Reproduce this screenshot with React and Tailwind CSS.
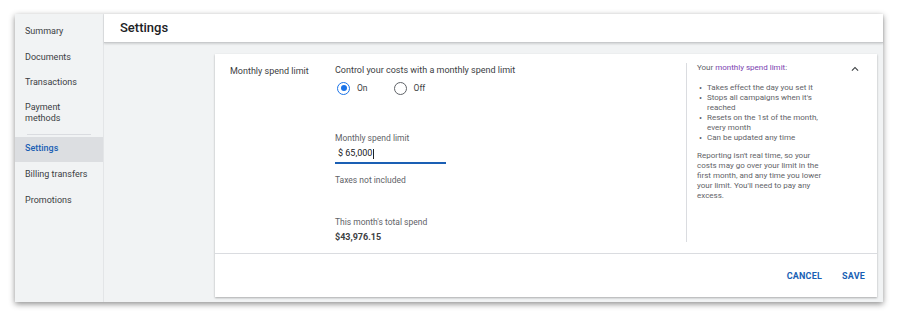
export default function App() {
  const nav = ["Summary", "Documents", "Transactions"];
  return (
    <div className="w-[900px] h-[317px] bg-white relative overflow-hidden" style={{ fontFamily: "Roboto, 'Liberation Sans', sans-serif" }}>
      <div className="absolute left-[15px] top-[14px] w-[868px] h-[288px] flex bg-[#f1f3f4] shadow-[0_2px_6px_rgba(0,0,0,0.45)]">
        {/* Sidebar */}
        <div className="w-[89px] shrink-0 border-r border-[#e3e5e7] flex flex-col pt-[5px] text-[9px] text-[#3c4043]">
          {nav.map((n) => (
            <div key={n} className="h-[25.5px] flex items-center pl-[10px]">{n}</div>
          ))}
          <div className="pl-[10px] pt-[6px] leading-[11px] h-[38px]">Payment<br />methods</div>
          <div className="mx-[12px] border-t border-[#dadce0]" />
          <div className="mt-[2px] h-[25px] bg-[#dcdee1] flex items-center pl-[10px] text-[#1a5fb4] font-medium">Settings</div>
          <div className="h-[26px] flex items-center pl-[10px]">Billing transfers</div>
          <div className="h-[26px] flex items-center pl-[10px]">Promotions</div>
        </div>
        {/* Main */}
        <div className="flex-1 flex flex-col">
          <div className="h-[29px] bg-white border-b border-[#c8cacc] shadow-[0_1px_2px_rgba(0,0,0,0.15)] flex items-center pl-[16px] text-[13px] font-medium text-[#202124]">Settings</div>
          <div className="flex-1 pl-[111px] pr-[6px] pt-[11px] pb-[5px]">
            <div className="h-full bg-white shadow-[0_1px_2px_rgba(0,0,0,0.3)] flex flex-col">
              <div className="h-[199px] flex pl-[15px]">
                <div className="w-[105px] pt-[10px] text-[9px] leading-[14px] text-[#3c4043]">Monthly spend limit</div>
                <div className="w-[351px] pt-[9px] text-[#3c4043]">
                  <div className="text-[9px] leading-[14px]">Control your costs with a monthly spend limit</div>
                  <div className="flex items-center mt-[4px] h-[14px] text-[8.5px]">
                    <div className="ml-[2px] w-[13px] h-[13px] rounded-full border-[1.5px] border-[#1a73e8] flex items-center justify-center">
                      <div className="w-[6px] h-[6px] rounded-full bg-[#1a73e8]" />
                    </div>
                    <span className="ml-[7px]">On</span>
                    <div className="ml-[26px] w-[13px] h-[13px] rounded-full border-[1.5px] border-[#5f6368]" />
                    <span className="ml-[7px]">Off</span>
                  </div>
                  <div className="mt-[37px] text-[8.5px] leading-[12px] text-[#5f6368]">Monthly spend limit</div>
                  <div className="w-[111px] mt-[3px] border-b-2 border-[#1a5fb4] pb-[3px] pl-[3px] text-[9px] leading-[12px] text-[#202124]">$ 65,000<span className="inline-block w-px h-[10px] bg-[#202124] align-middle ml-px" /></div>
                  <div className="mt-[10px] text-[8.5px] leading-[12px] text-[#5f6368]">Taxes not included</div>
                  <div className="mt-[30px] text-[8.5px] leading-[12px] text-[#5f6368]">This month's total spend</div>
                  <div className="mt-[3px] text-[9px] leading-[12px] font-bold text-[#3c4043]">$43,976.15</div>
                </div>
                <div className="mt-[9px] mb-[11px] border-l border-[#dadce0]" />
                <div className="flex-1 pl-[10px] pr-[15px] pt-[9px] text-[8px] text-[#5f6368] flex">
                  <div className="flex-1">
                    <div className="leading-[10px]">Your <span className="text-[#7b3fb0]">monthly spend limit</span>:</div>
                    <ul className="mt-[10px] leading-[10px]">
                      {[
                        ["Takes effect the day you set it"],
                        ["Stops all campaigns when it's", "reached"],
                        ["Resets on the 1st of the month,", "every month"],
                        ["Can be updated any time"],
                      ].map((lines, i) => (
                        <li key={i} className="flex">
                          <span className="w-[10px] pl-[2px] shrink-0 text-[9px]">•</span>
                          <span>{lines.map((l, j) => (<div key={j}>{l}</div>))}</span>
                        </li>
                      ))}
                    </ul>
                    <div className="mt-[8px] leading-[10px] w-[130px]">Reporting isn't real time, so your costs may go over your limit in the first month, and any time you lower your limit. You'll need to pay any excess.</div>
                  </div>
                  <svg width="14" height="14" viewBox="0 0 24 24" className="-mt-[1px]">
                    <path d="M7.41 15.41L12 10.83l4.59 4.58L18 14l-6-6-6 6z" fill="#3c4043" />
                  </svg>
                </div>
              </div>
              <div className="flex-1 border-t border-[#dadce0] flex items-center justify-end pr-[12px] pt-[2px] text-[9px] font-bold text-[#1a5fb4] tracking-[0.2px]">
                <span>CANCEL</span>
                <span className="ml-[20px]">SAVE</span>
              </div>
            </div>
          </div>
        </div>
      </div>
    </div>
  );
}
